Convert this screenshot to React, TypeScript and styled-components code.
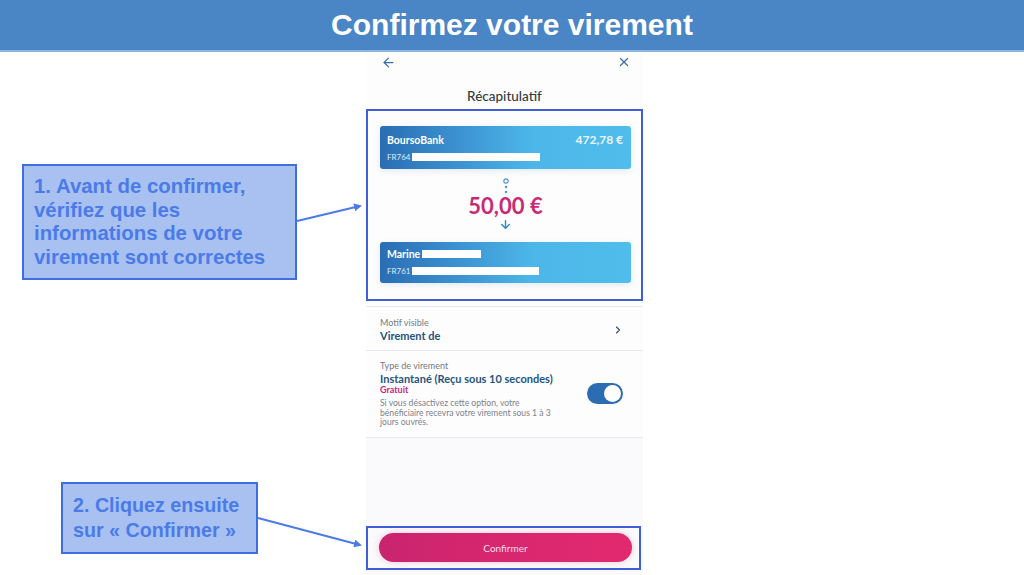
import styled, { createGlobalStyle } from "styled-components";
import { ArrowLeft, X, ArrowDown, ChevronRight } from "lucide-react";

const GlobalStyle = createGlobalStyle`
  html, body {
    margin: 0;
    padding: 0;
    background: #ffffff;
  }
  body {
    font-family: "Liberation Sans", Arial, sans-serif;
  }
  * {
    box-sizing: border-box;
  }
`;

const App = () => {
  return (
    <Page>
      <GlobalStyle />
      <Header>
        <Title>Confirmez votre virement</Title>
      </Header>

      <Main>
        <Notes>
          <Callout $width={275} $left={22} $top={112} $size={20.4} $lineHeight={23.5}>
            1. Avant de confirmer,
            <br />
            vérifiez que les
            <br />
            informations de votre
            <br />
            virement sont correctes
          </Callout>
          <Callout $width={197} $left={61} $top={202} $size={19.7} $lineHeight={25}>
            2. Cliquez ensuite
            <br />
            sur « Confirmer »
          </Callout>
        </Notes>

        <Screen>
          <TopBar>
            <ArrowLeft size={15} strokeWidth={2} />
            <X size={14} strokeWidth={2.2} />
          </TopBar>
          <ScreenTitle>Récapitulatif</ScreenTitle>

          <Highlight $top={5} $pad="15px 10px 16px 12px">
            <TransferCard $padTop={7}>
              <CardLine>
                <CardName>BoursoBank</CardName>
                <Balance>472,78 €</Balance>
              </CardLine>
              <Iban>
                FR764
                <Redacted $width={128} $height={8} />
              </Iban>
            </TransferCard>

            <Flow>
              <svg width="10" height="17" viewBox="0 0 10 17">
                <circle cx="5" cy="4" r="2.2" fill="none" stroke="#4a93d4" strokeWidth="1.2" />
                <circle cx="5" cy="10" r="1.2" fill="#4a93d4" />
                <circle cx="5" cy="15" r="1.2" fill="#4a93d4" />
              </svg>
              <Amount>50,00 €</Amount>
              <ArrowDown size={13} strokeWidth={2.6} color="#2f88cc" />
            </Flow>

            <TransferCard $padTop={5}>
              <CardLine>
                <CardName>
                  Marine
                  <Redacted $width={59} $height={8} />
                </CardName>
              </CardLine>
              <Iban>
                FR761
                <Redacted $width={127} $height={8} />
              </Iban>
            </TransferCard>
          </Highlight>

          <Row $gap={5} $padding="10px 19px 7px 14px">
            <RowText>
              <RowLabel>Motif visible</RowLabel>
              <RowValue>Virement de</RowValue>
            </RowText>
            <ChevronRight size={12} strokeWidth={2.2} color="#2a4e6e" />
          </Row>

          <Row $gap={0} $padding="9px 20px 9px 14px" $closed>
            <RowText>
              <RowLabel>Type de virement</RowLabel>
              <RowValue $tight>Instantané (Reçu sous 10 secondes)</RowValue>
              <Free>Gratuit</Free>
              <Hint>
                Si vous désactivez cette option, votre
                <br />
                bénéficiaire recevra votre virement sous 1 à 3
                <br />
                jours ouvrés.
              </Hint>
            </RowText>
            <Toggle>
              <Knob />
            </Toggle>
          </Row>

          <Footer>
            <Highlight $top={0} $pad="5px 7px 6px 11px" $right={2}>
              <ConfirmButton>Confirmer</ConfirmButton>
            </Highlight>
          </Footer>
        </Screen>
      </Main>

      <Pointers width="1024" height="575" viewBox="0 0 1024 575">
        <defs>
          <marker id="head" markerWidth="8" markerHeight="8" refX="6" refY="4" orient="auto" markerUnits="userSpaceOnUse">
            <path d="M0,0 L8,4 L0,8 z" fill="#4a7be8" />
          </marker>
        </defs>
        <line x1="297" y1="221" x2="360" y2="206" stroke="#4a7be8" strokeWidth="2" markerEnd="url(#head)" />
        <line x1="258" y1="518" x2="360" y2="545" stroke="#4a7be8" strokeWidth="2" markerEnd="url(#head)" />
      </Pointers>
    </Page>
  );
};

//  --- Page ---
const Page = styled.div`
  position: relative;
  width: 1024px;
  height: 575px;
  overflow: hidden;
  display: flex;
  flex-direction: column;
`;

const Header = styled.header`
  height: 52px;
  background-color: #4a86c6;
  border-bottom: 2px solid #8fb4e2;
  display: flex;
  align-items: center;
  justify-content: center;
`;

const Title = styled.h1`
  margin: 0;
  color: #ffffff;
  font-size: 30px;
  font-weight: bold;
  white-space: nowrap;
`;

const Main = styled.main`
  flex: 1;
  display: flex;
  min-height: 0;
`;

//  --- Callouts ---
const Notes = styled.section`
  width: 366px;
  display: flex;
  flex-direction: column;
  align-items: flex-start;
`;

const Callout = styled.div<{ $width: number; $left: number; $top: number; $size: number; $lineHeight: number }>`
  width: ${(p) => p.$width}px;
  margin: ${(p) => p.$top}px 0 0 ${(p) => p.$left}px;
  padding: 9px 6px 9px 10px;
  background-color: #a8c1f1;
  border: 2px solid #3d6fe0;
  color: #4a7be8;
  font-size: ${(p) => p.$size}px;
  font-weight: bold;
  line-height: ${(p) => p.$lineHeight}px;
  white-space: nowrap;
`;

const Pointers = styled.svg`
  position: absolute;
  left: 0;
  top: 0;
  pointer-events: none;
`;

//  --- Phone screen ---
const Screen = styled.section`
  width: 277px;
  display: flex;
  flex-direction: column;
  background-color: #fdfdfe;
  font-family: Lato, "Open Sans", sans-serif;
`;

const TopBar = styled.div`
  height: 20px;
  padding: 0 12px 0 15px;
  display: flex;
  align-items: center;
  justify-content: space-between;
  color: #3a6ea8;
`;

const ScreenTitle = styled.h2`
  margin: 16px 0 0;
  text-align: center;
  font-size: 13.5px;
  line-height: 16px;
  font-weight: 500;
  color: #333a40;
`;

const Highlight = styled.div<{ $top: number; $pad: string; $right?: number }>`
  margin: ${(p) => p.$top}px ${(p) => p.$right ?? 0}px 0 0;
  padding: ${(p) => p.$pad};
  border: 2px solid #3f5fd8;
  display: flex;
  flex-direction: column;
`;

const TransferCard = styled.div<{ $padTop: number }>`
  padding: ${(p) => p.$padTop}px 8px 8px 7px;
  border-radius: 3px;
  background: linear-gradient(90deg, #2a6db4 0%, #3c93d2 32%, #4cb6e8 60%, #50bdec 100%);
  box-shadow: 0 2px 6px rgba(40, 80, 130, 0.12);
  color: #ffffff;
  display: flex;
  flex-direction: column;
  gap: 6px;
`;

const CardLine = styled.div`
  display: flex;
  align-items: center;
  justify-content: space-between;
  height: 13px;
`;

const CardName = styled.span`
  display: flex;
  align-items: center;
  font-size: 10.5px;
  font-weight: bold;
`;

const Balance = styled.span`
  font-size: 12px;
  font-weight: bold;
  color: #eaf6fd;
`;

const Iban = styled.div`
  display: flex;
  align-items: center;
  height: 9px;
  font-size: 8px;
  color: #dcecf8;
`;

const Redacted = styled.span<{ $width: number; $height: number }>`
  display: inline-block;
  width: ${(p) => p.$width}px;
  height: ${(p) => p.$height}px;
  margin-left: 2px;
  background-color: #ffffff;
`;

const Flow = styled.div`
  margin: 8px 0 11px;
  display: flex;
  flex-direction: column;
  align-items: center;
`;

const Amount = styled.div`
  font-size: 22px;
  line-height: 24px;
  font-weight: bold;
  color: #c82a74;
`;

const Row = styled.div<{ $padding: string; $gap: number; $closed?: boolean }>`
  margin-top: ${(p) => p.$gap}px;
  padding: ${(p) => p.$padding};
  display: flex;
  align-items: center;
  justify-content: space-between;
  border-top: 1px solid #e5e8ee;
  border-bottom: ${(p) => (p.$closed ? "1px solid #e5e8ee" : "none")};
`;

const RowText = styled.div`
  display: flex;
  flex-direction: column;
`;

const RowLabel = styled.span`
  font-size: 9px;
  line-height: 12px;
  color: #737b84;
`;

const RowValue = styled.span<{ $tight?: boolean }>`
  font-size: 11px;
  line-height: ${(p) => (p.$tight ? 13 : 14)}px;
  font-weight: bold;
  color: #24557f;
`;

const Free = styled.span`
  font-size: 9px;
  line-height: 10px;
  font-weight: bold;
  color: #c8287a;
`;

const Hint = styled.p`
  margin: 4px 0 0;
  font-size: 8.6px;
  line-height: 9.5px;
  color: #7b838c;
`;

const Toggle = styled.div`
  width: 36px;
  height: 21px;
  padding: 2px;
  border-radius: 11px;
  background-color: #2c6cb2;
  display: flex;
  justify-content: flex-end;
`;

const Knob = styled.span`
  width: 17px;
  height: 17px;
  border-radius: 50%;
  background-color: #ffffff;
`;

const Footer = styled.div`
  flex: 1;
  display: flex;
  flex-direction: column;
  justify-content: flex-end;
  padding-bottom: 5px;
  background-color: #fafafc;
`;

const ConfirmButton = styled.button`
  height: 29px;
  border: none;
  border-radius: 15px;
  background: linear-gradient(90deg, #c9246f 0%, #d8276f 50%, #e2296f 100%);
  box-shadow: 0 0 6px rgba(210, 40, 110, 0.25);
  color: #f6dce8;
  font-family: Lato, "Open Sans", sans-serif;
  font-size: 10px;
  cursor: pointer;
`;

export default App;
